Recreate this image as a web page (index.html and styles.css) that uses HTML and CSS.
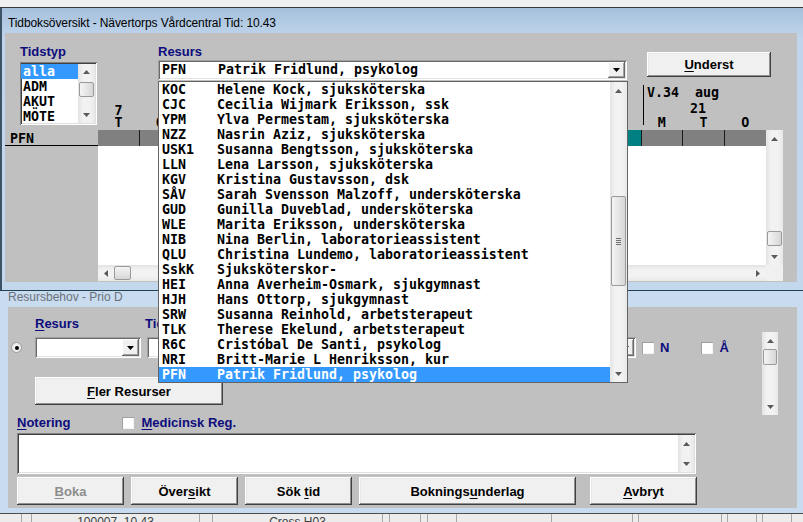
FILE: index.html
```html
<!DOCTYPE html>
<html lang="sv">
<head>
<meta charset="utf-8">
<title>Tidboksöversikt</title>
<link rel="stylesheet" href="styles.css">
</head>
<body>
<div class="topstrip"></div>

<div class="win win-main">
  <div class="caption">Tidboksöversikt - Nävertorps Vårdcentral Tid: 10.43</div>
  <div class="client client-main">
    <div class="side-top">
      <div class="lbl">Tidstyp</div>
      <div class="listbox">
        <div class="lb-items mono">
          <div class="lb-item sel">alla</div>
          <div class="lb-item">ADM</div>
          <div class="lb-item">AKUT</div>
          <div class="lb-item">MÖTE</div>
        </div>
        <div class="vsb vsb-lb">
          <div class="sb-btn"><svg width="7" height="4" viewBox="0 0 7 4"><path d="M0 4L3.5 0L7 4Z"/></svg></div>
          <div class="sb-track"><div class="sb-thumb"></div></div>
          <div class="sb-btn"><svg width="7" height="4" viewBox="0 0 7 4"><path d="M0 0L7 0L3.5 4Z"/></svg></div>
        </div>
      </div>
    </div>

    <div class="main-top">
      <div class="controls">
        <div class="res-block">
          <div class="lbl">Resurs</div>
          <div class="combo combo-top">
            <span class="combo-text mono pre">PFN    Patrik Fridlund, psykolog</span>
            <span class="dd-btn"><svg width="7" height="4" viewBox="0 0 7 4"><path d="M0 0L7 0L3.5 4Z"/></svg></span>
          </div>
        </div>
        <div class="btn btn-underst"><span><u>U</u>nderst</span></div>
      </div>
      <div class="colheads mono">
        <div class="dayhead"><div>7</div><div>T</div></div>
        <div class="dayhead"><div>&nbsp;</div><div>O</div></div>
        <div class="colspacer"></div>
        <div class="weekhead">
          <div class="wk-line pre">V.34  aug</div>
          <div class="wk-day">21</div>
          <div class="wk-wd"><span>M</span><span>T</span><span>O</span></div>
        </div>
      </div>
    </div>

    <div class="side-row">
      <div class="rowlabel mono">PFN</div>
    </div>

    <div class="grid">
      <div class="bar">
        <span class="cell"></span><span class="cell"></span><span class="cell"></span><span class="cell"></span>
        <span class="cell"></span><span class="cell"></span><span class="cell"></span><span class="cell"></span>
        <span class="cell"></span><span class="cell"></span><span class="cell"></span><span class="cell"></span>
        <span class="cell today"></span><span class="cell"></span><span class="cell"></span><span class="cell last"></span>
      </div>
      <div class="vsb vsb-grid">
        <div class="sb-btn"><svg width="7" height="4" viewBox="0 0 7 4"><path d="M0 4L3.5 0L7 4Z"/></svg></div>
        <div class="sb-track"><div class="sb-thumb"></div></div>
        <div class="sb-btn"><svg width="7" height="4" viewBox="0 0 7 4"><path d="M0 0L7 0L3.5 4Z"/></svg></div>
      </div>
      <div class="gbody"></div>
      <div class="hsb">
        <div class="sb-btn"><svg width="4" height="7" viewBox="0 0 4 7"><path d="M4 0L4 7L0 3.5Z"/></svg></div>
        <div class="sb-track"><div class="sb-thumb"></div></div>
        <div class="sb-btn"><svg width="4" height="7" viewBox="0 0 4 7"><path d="M0 0L4 3.5L0 7Z"/></svg></div>
      </div>
      <div class="corner"></div>
    </div>
  </div>
</div>

<div class="win win-sub">
  <div class="caption2">Resursbehov - Prio D</div>
  <div class="client client-sub">
    <div class="sub-top">
      <div class="sub-left">
        <div class="sub-labels">
          <span class="lbl lbl-res"><u>R</u>esurs</span>
          <span class="lbl lbl-tid">Tid</span>
        </div>
        <div class="sub-combos">
          <span class="radio"><span class="dot"></span></span>
          <div class="combo combo-s1">
            <span class="combo-text"></span>
            <span class="dd-btn"><svg width="7" height="4" viewBox="0 0 7 4"><path d="M0 0L7 0L3.5 4Z"/></svg></span>
          </div>
          <div class="combo combo-s2">
            <span class="combo-text"></span>
            <span class="dd-btn"><svg width="7" height="4" viewBox="0 0 7 4"><path d="M0 0L7 0L3.5 4Z"/></svg></span>
          </div>
          <span class="check cb-n"></span><span class="lbl cbl">N</span>
          <span class="check cb-a"></span><span class="lbl cbl">Å</span>
        </div>
        <div class="btn btn-fler"><span><u>F</u>ler Resurser</span></div>
      </div>
      <div class="vsb vsb-sub">
        <div class="sb-btn"><svg width="7" height="4" viewBox="0 0 7 4"><path d="M0 4L3.5 0L7 4Z"/></svg></div>
        <div class="sb-track"><div class="sb-thumb"></div></div>
        <div class="sb-btn"><svg width="7" height="4" viewBox="0 0 7 4"><path d="M0 0L7 0L3.5 4Z"/></svg></div>
      </div>
    </div>
    <div class="not-row">
      <span class="lbl lbl-not"><u>N</u>otering</span>
      <span class="check cb-med"></span>
      <span class="lbl lbl-med"><u>M</u>edicinsk Reg.</span>
    </div>
    <div class="textarea">
      <div class="ta-field"></div>
      <div class="vsb vsb-ta">
        <div class="sb-btn"><svg width="7" height="4" viewBox="0 0 7 4"><path d="M0 4L3.5 0L7 4Z"/></svg></div>
        <div class="sb-btn"><svg width="7" height="4" viewBox="0 0 7 4"><path d="M0 0L7 0L3.5 4Z"/></svg></div>
      </div>
    </div>
    <div class="btnrow">
      <div class="btn btn-sm disabled"><span><u>B</u>oka</span></div>
      <div class="btn btn-sm"><span>Över<u>s</u>ikt</span></div>
      <div class="btn btn-sm"><span>Sök <u>t</u>id</span></div>
      <div class="btn btn-wide"><span>Boknings<u>u</u>nderlag</span></div>
      <div class="btn btn-sm btn-avbryt"><span><u>A</u>vbryt</span></div>
    </div>
  </div>
</div>

<div class="status">
  <span class="sp w22"></span><span class="sp w10"></span>
  <span class="sp w168 st-text">100007&nbsp;&nbsp;10.43</span>
  <span class="sp w13"></span>
  <span class="sp w170 st-text">Cross H03</span>
  <span class="sp w7"></span><span class="sp w31"></span><span class="sp w7"></span><span class="sp w29"></span>
  <span class="sp w95"></span><span class="sp w81"></span><span class="sp w6"></span><span class="sp w83"></span>
  <span class="sp w6"></span><span class="sp w29"></span><span class="sp w6"></span><span class="sp w29"></span>
</div>

<div class="dropdown mono">
  <div class="dd-list">
    <div class="dd-item"><span class="code">KOC</span><span>Helene Kock, sjuksköterska</span></div>
    <div class="dd-item"><span class="code">CJC</span><span>Cecilia Wijmark Eriksson, ssk</span></div>
    <div class="dd-item"><span class="code">YPM</span><span>Ylva Permestam, sjuksköterska</span></div>
    <div class="dd-item"><span class="code">NZZ</span><span>Nasrin Aziz, sjuksköterska</span></div>
    <div class="dd-item"><span class="code">USK1</span><span>Susanna Bengtsson, sjuksköterska</span></div>
    <div class="dd-item"><span class="code">LLN</span><span>Lena Larsson, sjuksköterska</span></div>
    <div class="dd-item"><span class="code">KGV</span><span>Kristina Gustavsson, dsk</span></div>
    <div class="dd-item"><span class="code">SÅV</span><span>Sarah Svensson Malzoff, undersköterska</span></div>
    <div class="dd-item"><span class="code">GUD</span><span>Gunilla Duveblad, undersköterska</span></div>
    <div class="dd-item"><span class="code">WLE</span><span>Marita Eriksson, undersköterska</span></div>
    <div class="dd-item"><span class="code">NIB</span><span>Nina Berlin, laboratorieassistent</span></div>
    <div class="dd-item"><span class="code">QLU</span><span>Christina Lundemo, laboratorieassistent</span></div>
    <div class="dd-item"><span class="code">SskK</span><span>Sjuksköterskor-</span></div>
    <div class="dd-item"><span class="code">HEI</span><span>Anna Averheim-Osmark, sjukgymnast</span></div>
    <div class="dd-item"><span class="code">HJH</span><span>Hans Ottorp, sjukgymnast</span></div>
    <div class="dd-item"><span class="code">SRW</span><span>Susanna Reinhold, arbetsterapeut</span></div>
    <div class="dd-item"><span class="code">TLK</span><span>Therese Ekelund, arbetsterapeut</span></div>
    <div class="dd-item"><span class="code">R6C</span><span>Cristóbal De Santi, psykolog</span></div>
    <div class="dd-item"><span class="code">NRI</span><span>Britt-Marie L Henriksson, kur</span></div>
    <div class="dd-item sel"><span class="code">PFN</span><span>Patrik Fridlund, psykolog</span></div>
  </div>
  <div class="vsb vsb-dd">
    <div class="sb-btn"><svg width="7" height="4" viewBox="0 0 7 4"><path d="M0 4L3.5 0L7 4Z"/></svg></div>
    <div class="sb-track"><div class="sb-thumb"><span class="grip"></span></div></div>
    <div class="sb-btn"><svg width="7" height="4" viewBox="0 0 7 4"><path d="M0 0L7 0L3.5 4Z"/></svg></div>
  </div>
</div>
</body>
</html>
```

FILE: styles.css
```css
* { box-sizing: border-box; }
html, body { margin: 0; padding: 0; }
body {
  width: 803px;
  height: 522px;
  overflow: hidden;
  position: relative;
  background: #c8daee;
  font-family: "Liberation Sans", Arial, sans-serif;
  color: #000;
}
u { text-decoration: underline; text-underline-offset: 2px; }

.mono {
  font-family: "DejaVu Sans Mono", "Liberation Mono", monospace;
  font-weight: bold;
  font-size: 13.29px;
  line-height: 15px;
  white-space: nowrap;
}
.pre { white-space: pre; }

.lbl {
  font-weight: bold;
  font-size: 13px;
  line-height: 15px;
  color: #0c0c7c;
  white-space: nowrap;
}

/* ---------- top strip ---------- */
.topstrip {
  height: 8px;
  background: #f0f0f0;
  border-bottom: 1px solid #3a3a3a;
}

/* ---------- main window ---------- */
.win-main {
  height: 282px;
  border-left: 2px solid #3e5265;
  background: linear-gradient(#a6c0dc, #c0d5eb 30px, #c4d8ed);
}
.caption {
  height: 25px;
  padding: 6px 0 0 6px;
  font-size: 12px;
  line-height: 19px;
  letter-spacing: -0.1px;
  color: #000;
  white-space: nowrap;
}
.client-main {
  margin-left: 3px;
  width: 792px;
  height: 249px;
  background: #c0c0c0;
  display: grid;
  grid-template-columns: 93px 685px 14px;
  grid-template-rows: 97px 151px 1px;
}
.side-top { grid-column: 1; grid-row: 1; padding: 11px 0 0 15px; }
.main-top { grid-column: 2; grid-row: 1; }
.side-row { grid-column: 1; grid-row: 2; }
.grid { grid-column: 2; grid-row: 2; }

.listbox {
  margin-top: 3px;
  width: 77px;
  height: 63px;
  display: flex;
  background: #fff;
  box-shadow: inset 1px 1px #808080, inset -1px -1px #fff, inset 2px 2px #404040, inset -2px -2px #dfdfdf;
  padding: 2px 2px 2px 1px;
  overflow: hidden;
}
.lb-items { flex: 1; }
.lb-item { height: 15px; padding-left: 2px; }
.lb-item.sel { background: #3399ff; color: #fff; }

/* controls row */
.controls { display: flex; height: 52px; }
.res-block { margin-left: 60px; padding-top: 11px; }
.res-block .combo { margin-top: 1px; }
.combo {
  display: flex;
  height: 20px;
  background: #fff;
  padding: 2px;
  box-shadow: inset 1px 1px #a0a0a0, inset -1px -1px #fff, inset 2px 2px #696969, inset -2px -2px #e3e3e3;
}
.combo-top { width: 469px; }
.combo-text { flex: 1; padding-left: 2px; overflow: hidden; }
.dd-btn {
  width: 17px;
  display: flex;
  align-items: center;
  justify-content: center;
  background: #f0f0f0;
  box-shadow: inset -1px -1px #696969, inset 1px 1px #fff, inset -2px -2px #a0a0a0;
}
.dd-btn svg { fill: #000; }

.btn {
  display: flex;
  align-items: center;
  justify-content: center;
  background: #f0f0f0;
  box-shadow: inset -1px -1px #404040, inset 1px 1px #fff, inset -2px -2px #909090, inset 2px 2px #e8e8e8;
  font-weight: bold;
  font-size: 13px;
  white-space: nowrap;
}
.btn-underst { margin: 19px 0 0 20px; width: 124px; height: 25px; }

/* column headers */
.colheads { display: flex; height: 45px; }
.dayhead { width: 41px; padding-top: 20px; line-height: 12px; text-align: center; }
.dayhead + .dayhead { width: 42px; }
.colspacer { flex: 1; }
.weekhead {
  width: 125px;
  margin-right: 17px;
  background: linear-gradient(#000, #000) no-repeat 2px 0 / 1px 40px;
}
.wk-line { padding-left: 6px; height: 15px; margin-bottom: 2px; }
.wk-day { padding-left: 49px; line-height: 14px; }
.wk-wd { display: flex; line-height: 14px; }
.wk-wd span { flex: 1; text-align: center; }

.rowlabel {
  height: 16px;
  padding: 2px 0 0 5px;
  line-height: 13px;
  border-bottom: 1px solid #000;
}

/* grid */
.grid {
  display: grid;
  grid-template-columns: 668px 17px;
  grid-template-rows: 16px 119px 16px;
}
.bar { grid-column: 1; grid-row: 1; display: flex; background: #808080; }
.bar .cell { flex: 1; border-right: 1px solid #1a1a1a; }
.bar .cell.today { background: #008080; }
.bar .cell.last { border-right: 0; }
.gbody { grid-column: 1; grid-row: 2; background: #fff; }
.vsb-grid { grid-column: 2; grid-row: 1 / 3; }
.hsb { grid-column: 1; grid-row: 3; }
.corner { grid-column: 2; grid-row: 3; background: #f0f0f0; }

/* ---------- scrollbars ---------- */
.vsb {
  width: 17px;
  display: flex;
  flex-direction: column;
  background: linear-gradient(90deg, #e3e3e3, #f2f2f2 30%, #f2f2f2 70%, #e8e8e8);
}
.sb-btn {
  height: 17px;
  flex: none;
  display: flex;
  align-items: center;
  justify-content: center;
}
.sb-btn svg { fill: #5a5a5a; }
.sb-track { flex: 1; }
.sb-thumb {
  margin: 0 1px;
  border: 1px solid #9a9a9a;
  border-radius: 2px;
  background: linear-gradient(90deg, #f4f4f4, #e6e6e6 50%, #d6d6d6);
  display: flex;
  align-items: center;
  justify-content: center;
}
.vsb-lb { height: 59px; width: 17px; }
.vsb-lb .sb-btn { height: 16px; }
.vsb-lb .sb-thumb { height: 15px; margin-top: 2px; }
.vsb-grid .sb-thumb { margin-top: 84px; height: 15px; }
.vsb-dd { height: 100%; }
.vsb-dd .sb-thumb { margin-top: 97px; height: 90px; }
.grip {
  width: 5px;
  height: 7px;
  background: repeating-linear-gradient(#6f6f6f 0 1px, transparent 1px 2px);
}
.hsb {
  display: flex;
  background: linear-gradient(#e3e3e3, #f2f2f2 30%, #f2f2f2 70%, #e8e8e8);
}
.hsb .sb-btn { width: 16px; height: 16px; }
.hsb .sb-track { display: flex; }
.hsb .sb-thumb { width: 17px; margin: 1px 0; height: 14px; background: linear-gradient(#f4f4f4, #e6e6e6 50%, #d6d6d6); }

/* ---------- sub window ---------- */
.win-sub {
  height: 223px;
  border-top: 1px solid #1f4152;
  background: #c9dbee;
}
.caption2 {
  height: 16px;
  padding-left: 8px;
  font-size: 12px;
  line-height: 13px;
  color: #6a727c;
}
.client-sub {
  margin-left: 8px;
  width: 789px;
  height: 201px;
  background: #c0c0c0;
}
.sub-top { display: flex; height: 108px; }
.sub-left { flex: 1; }
.sub-labels { display: flex; margin-top: 9px; height: 15px; }
.lbl-res { margin-left: 27px; }
.lbl-tid { margin-left: 66px; }
.sub-combos { display: flex; align-items: center; margin-top: 6px; height: 21px; }
.radio {
  margin-left: 3px;
  width: 11px;
  height: 11px;
  border-radius: 50%;
  background: #eeeeee;
  border: 1px solid #9a9a9a;
  display: flex;
  align-items: center;
  justify-content: center;
}
.dot { width: 4px; height: 4px; border-radius: 50%; background: #000; }
.combo-s1 { margin-left: 13px; width: 106px; height: 21px; }
.combo-s2 { margin-left: 6px; width: 489px; height: 21px; }
.check {
  width: 12px;
  height: 12px;
  background: #fff;
  box-shadow: inset 1px 1px #a0a0a0, inset -1px -1px #f4f4f4;
  flex: none;
}
.cb-n { margin-left: 6px; }
.cbl { margin-left: 6px; }
.cb-a { margin-left: 32px; }
.btn-fler { margin: 19px 0 0 27px; width: 188px; height: 28px; }
.vsb-sub { margin: 25px 19px 0 0; height: 83px; width: 16px; }
.vsb-sub .sb-thumb { margin-top: 0; height: 16px; }

.not-row { display: flex; align-items: center; height: 15px; }
.lbl-not { margin-left: 9px; }
.cb-med { margin-left: 52px; }
.lbl-med { margin-left: 7px; }

.textarea {
  margin: 3px 0 0 9px;
  width: 679px;
  height: 41px;
  display: flex;
  background: #fff;
  padding: 2px;
  box-shadow: inset 1px 1px #808080, inset -1px -1px #fff, inset 2px 2px #404040, inset -2px -2px #dfdfdf;
}
.ta-field { flex: 1; }
.vsb-ta { height: 37px; width: 16px; justify-content: space-between; }
.vsb-ta .sb-btn { height: 17px; }

.btnrow { display: flex; margin: 3px 0 0 9px; height: 28px; gap: 7px; }
.btn-sm { width: 107px; height: 28px; }
.btn-wide { width: 217px; height: 28px; }
.btn-avbryt { margin-left: 7px; }
.btn.disabled { color: #8d8d8d; }

/* ---------- status ---------- */
.status {
  height: 9px;
  display: flex;
  border-top: 1px solid #4e4e4e;
  background: #ececec;
  overflow: hidden;
}
.sp { height: 9px; border-right: 1px solid #a8a8a8; flex: none; }
.st-text { font-size: 12px; line-height: 14px; padding-top: 1px; text-align: center; color: #404040; white-space: nowrap; overflow: hidden; }
.w22 { width: 22px; } .w10 { width: 10px; } .w168 { width: 168px; } .w13 { width: 13px; }
.w170 { width: 170px; } .w7 { width: 7px; } .w31 { width: 31px; } .w29 { width: 29px; }
.w95 { width: 95px; } .w81 { width: 81px; } .w6 { width: 6px; } .w83 { width: 83px; }

/* ---------- dropdown (overlay) ---------- */
.dropdown {
  position: absolute;
  left: 158px;
  top: 81px;
  width: 470px;
  height: 302px;
  border: 1px solid #646464;
  background: #fff;
  display: flex;
  overflow: hidden;
}
.dd-list { flex: 1; overflow: hidden; }
.dd-item { display: flex; height: 15px; padding-left: 3px; }
.dd-item .code { width: 55px; flex: none; }
.dd-item.sel { background: #3399ff; color: #fff; }
```
